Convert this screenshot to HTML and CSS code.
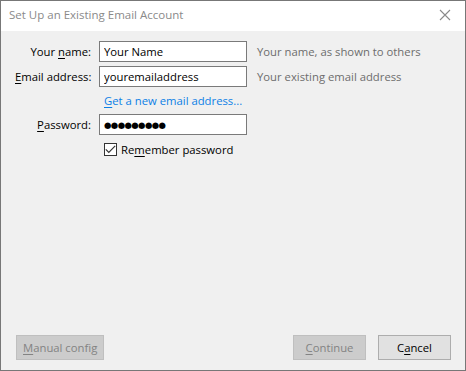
FILE: index.html
```html
<!DOCTYPE html>
<html lang="en">
  <head>
    <meta charset="UTF-8" />
    <title>Set Up an Existing Email Account</title>
    <link rel="stylesheet" href="styles.css">
  </head>
  <body>
    <div class="window">
      <!-- Title bar -->
      <div class="titlebar">
        <span class="title">Set Up an Existing Email Account</span>
        <span class="close">
          <svg width="12" height="12" viewBox="0 0 12 12">
            <path d="M1 1 L11 11 M11 1 L1 11" stroke="#8a8a8a" stroke-width="1.1" fill="none" />
          </svg>
        </span>
      </div>

      <div class="content">
        <div class="form">
          <label class="label">Your <u>n</u>ame:</label>
          <input class="field" type="text" value="Your Name" />
          <span class="hint">Your name, as shown to others</span>

          <label class="label"><u>E</u>mail address:</label>
          <input class="field" type="text" value="youremailaddress" />
          <span class="hint">Your existing email address</span>

          <span></span>
          <a class="link" href="#"><u>G</u>et a new email address...</a>
          <span></span>

          <label class="label"><u>P</u>assword:</label>
          <div class="field password">●●●●●●●●●</div>
          <span></span>

          <span></span>
          <label class="remember">
            <span class="checkbox">
              <svg width="11" height="9" viewBox="0 0 11 9">
                <path d="M0.8 4.3 L3.8 7.4 L10.2 0.8" stroke="#333" stroke-width="1.2" fill="none" />
              </svg>
            </span>
            <span>Re<u>m</u>ember password</span>
          </label>
          <span></span>
        </div>

        <div class="footer">
          <button class="btn disabled"><u>M</u>anual config</button>
          <div class="spacer"></div>
          <button class="btn disabled"><u>C</u>ontinue</button>
          <button class="btn">C<u>a</u>ncel</button>
        </div>
      </div>
    </div>
  </body>
</html>
```

FILE: styles.css
```css
* {
  box-sizing: border-box;
  margin: 0;
  padding: 0;
}

body {
  width: 466px;
  height: 371px;
  font-family: "Open Sans", sans-serif;
  font-size: 11.3px;
  color: #000;
  overflow: hidden;
}

u {
  text-decoration: underline;
  text-underline-offset: 2px;
}

.window {
  width: 466px;
  height: 371px;
  border: 1px solid #777;
  background-color: #f0f0f0;
  display: flex;
  flex-direction: column;
}

/* Title bar */
.titlebar {
  height: 30px;
  background-color: #fff;
  display: flex;
  align-items: center;
  justify-content: space-between;
  padding: 0 14px 3px 8px;
}

.title {
  color: #8a8a8a;
  font-size: 11.5px;
}

.close {
  display: flex;
  align-items: center;
}

/* Form */
.content {
  flex: 1;
  display: flex;
  flex-direction: column;
  padding: 10px 14px 10px 14px;
}

.form {
  display: grid;
  grid-template-columns: 76px 148px auto;
  column-gap: 8px;
  row-gap: 4px;
  align-items: center;
}

.label {
  text-align: right;
  white-space: nowrap;
}

.field {
  height: 21px;
  border: 1px solid #7a7a7a;
  background-color: #fff;
  font-family: "Open Sans", sans-serif;
  font-size: 11.3px;
  padding: 0 4px;
  outline: none;
  color: #000;
}

.password {
  display: flex;
  align-items: center;
  font-family: "DejaVu Sans", sans-serif;
  font-size: 8.5px;
  letter-spacing: -0.6px;
}

.hint {
  color: #6d6d6d;
  padding-left: 2px;
  white-space: nowrap;
}

.link {
  color: #0c7fe6;
  text-decoration: none;
  line-height: 19px;
  padding-left: 5px;
  white-space: nowrap;
}

.remember {
  display: flex;
  align-items: center;
  gap: 4px;
  padding-left: 5px;
  height: 20px;
  white-space: nowrap;
}

.checkbox {
  width: 13px;
  height: 13px;
  border: 1px solid #333;
  background-color: #fff;
  display: flex;
  align-items: center;
  justify-content: center;
}

/* Buttons */
.footer {
  margin-top: auto;
  display: flex;
  gap: 12px;
  padding-left: 1px;
}

.spacer {
  flex: 1;
}

.btn {
  height: 25px;
  min-width: 73px;
  padding: 0 6px;
  background-color: #e1e1e1;
  border: 1px solid #adadad;
  font-family: "Open Sans", sans-serif;
  font-size: 11.3px;
  color: #000;
}

.btn.disabled {
  background-color: #cccccc;
  border-color: #bfbfbf;
  color: #838383;
}
```
